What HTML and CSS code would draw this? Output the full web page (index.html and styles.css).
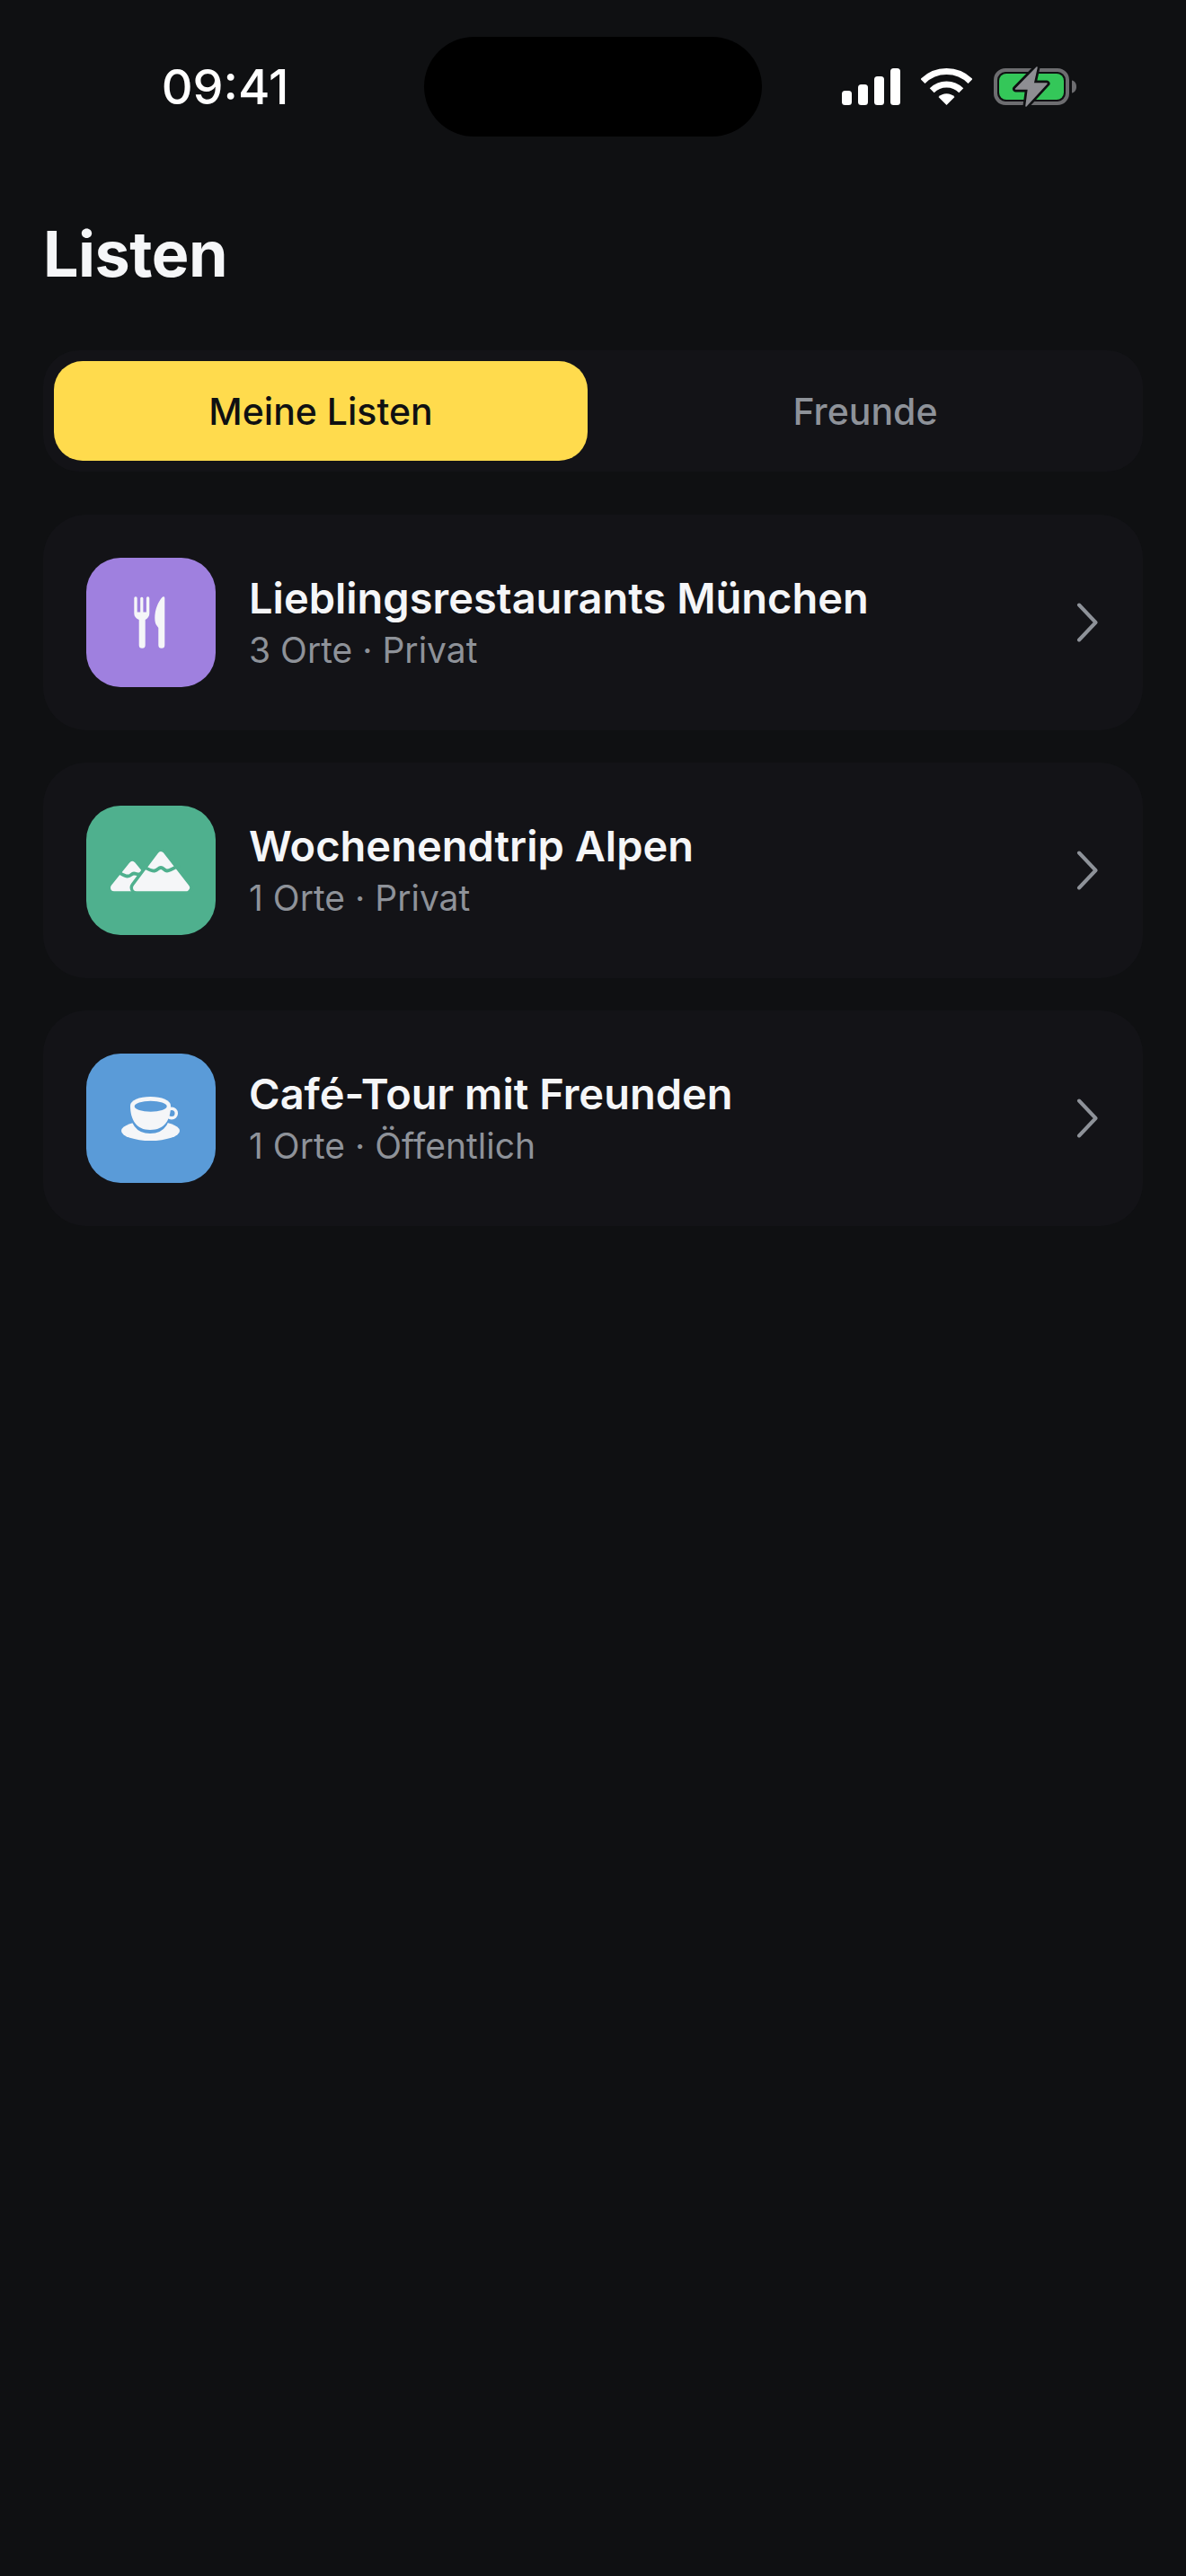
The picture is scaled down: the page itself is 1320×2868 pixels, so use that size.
FILE: index.html
```html
<!DOCTYPE html>
<html lang="de">
<head>
<meta charset="utf-8">
<title>Listen</title>
<link rel="stylesheet" href="styles.css">
</head>
<body>
<div class="status">
  <div class="time">09:41</div>
  <div class="island"></div>
  <div class="status-icons">
    <svg class="signal" width="65" height="41" viewBox="0 0 65 41"><rect x="0" y="25" width="11" height="16" rx="3.5"/><rect x="18" y="18" width="11" height="23" rx="3.5"/><rect x="36" y="9" width="11" height="32" rx="3.5"/><rect x="54" y="0" width="11" height="41" rx="3.5"/></svg>
    <svg class="wifi" width="57" height="41" viewBox="0 0 57 41"><path class="wifi-arc" d="M2 14.5A37.5 37.5 0 0 1 55 14.5"/><path class="wifi-arc" d="M12.2 24.7A23 23 0 0 1 44.8 24.7"/><path class="wifi-dot" d="M28.5 41L19.5 32A12.7 12.7 0 0 1 37.5 32Z"/></svg>
    <svg class="battery" width="94" height="49" viewBox="0 0 94 49"><rect class="batt-shell" x="2" y="6" width="80" height="37" rx="11"/><rect class="batt-fill" x="6" y="10" width="72" height="29" rx="8"/><path class="batt-nub" d="M87 17.500c3 .5 5 3 5 7s-2 6.500-5 7z"/><path class="batt-halo" d="M48 3L24.500 27H38.500L36 46L59 21H44Z"/><path class="batt-bolt" d="M48 3L24.500 27H38.500L36 46L59 21H44Z"/></svg>
  </div>
</div>

<h1 class="page-title">Listen</h1>

<div class="segment">
  <div class="seg-item seg-active">Meine Listen</div>
  <div class="seg-item">Freunde</div>
</div>

<div class="list">
  <div class="card">
    <div class="thumb thumb-purple">
      <svg width="144" height="144" viewBox="0 0 144 144"><path class="glyph" d="M53.300 45a1.700 1.700 0 0 1 3.400 0V60.500h3.500V45a1.700 1.700 0 0 1 3.200 0V60.500h3.500V45a1.700 1.700 0 0 1 3.400 0V62c0 3-1.800 5.500-4.600 7V97.200a3.500 3.500 0 0 1-7 0V69C55.100 67.500 53.300 65 53.300 62Z"/><path class="glyph" d="M84.500 44C80 49 76.300 58 76.300 67C76.300 71 77 73.500 78.500 75.500L80.300 78V97.200a3.500 3.500 0 0 0 7 0V45C87.300 43 85.500 43 84.500 44Z"/></svg>
    </div>
    <div class="card-text">
      <div class="card-title">Lieblingsrestaurants München</div>
      <div class="card-sub">3 Orte · Privat</div>
    </div>
    <svg class="chev" width="24" height="44" viewBox="0 0 24 44"><path d="M3 2.500L21.500 22L3 41.500"/></svg>
  </div>
  <div class="card">
    <div class="thumb thumb-green">
      <svg width="144" height="144" viewBox="0 0 144 144"><path class="glyph glyph-line" d="M51.300 66L62 79L55 91.300H31Z"/><path class="wave" d="M34 73C38 75 42 78.500 46 78.500S50 75.500 53 75.500S57 77.500 62 76"/><path class="mount-gap" d="M83 55.300L111 91.300H56Z"/><path class="glyph glyph-line" d="M83 55.300L111 91.300H56Z"/><path class="wave" d="M62 67C68 70 72 73 76 72.500S80 69 83 69S87 72.500 90 72.500S97 70 104 66"/></svg>
    </div>
    <div class="card-text">
      <div class="card-title">Wochenendtrip Alpen</div>
      <div class="card-sub">1 Orte · Privat</div>
    </div>
    <svg class="chev" width="24" height="44" viewBox="0 0 24 44"><path d="M3 2.500L21.500 22L3 41.500"/></svg>
  </div>
  <div class="card">
    <div class="thumb thumb-blue">
      <svg width="144" height="144" viewBox="0 0 144 144"><ellipse class="glyph" cx="71.500" cy="86" rx="32.500" ry="11"/><path class="cup-gap" d="M49 58C49 75 54 88 71 88C88 88 93 75 94 58Z"/><circle class="cup-handle" cx="95" cy="66.500" r="5.300"/><path class="glyph" d="M49 58C49 52 59 48 71.500 48S94 52 94 58C94 74 87 85 71 85C56 85 49 74 49 58Z"/><ellipse class="cup-inner" cx="71.700" cy="58.700" rx="18" ry="6"/></svg>
    </div>
    <div class="card-text">
      <div class="card-title">Café-Tour mit Freunden</div>
      <div class="card-sub">1 Orte · Öffentlich</div>
    </div>
    <svg class="chev" width="24" height="44" viewBox="0 0 24 44"><path d="M3 2.500L21.500 22L3 41.500"/></svg>
  </div>
</div>
</body>
</html>
```
FILE: styles.css
```css
* { box-sizing: border-box; }
html, body { margin: 0; padding: 0; }
body {
  width: 1320px;
  height: 2868px;
  overflow: hidden;
  padding-top: 41px;
  background: #0f1012;
  color: #f5f6f8;
  font-family: Inter, "Liberation Sans", sans-serif;
}
.status {
  display: flex;
  align-items: center;
  height: 111px;
}
.time {
  width: 472px;
  padding-left: 29px;
  text-align: center;
  font-size: 54px;
  font-weight: 550;
  color: #fff;
  line-height: 1;
}
.island {
  width: 376px;
  height: 111px;
  border-radius: 56px;
  background: #000;
}
.status-icons {
  display: flex;
  align-items: center;
  margin-left: 89px;
  gap: 23px;
}
.signal, .wifi-dot { fill: #fff; }
.wifi-arc { fill: none; stroke: #fff; stroke-width: 7; }
.battery { margin-left: 1px; }
.batt-shell { fill: none; stroke: #6d6d70; stroke-width: 4; }
.batt-fill { fill: #34c759; }
.batt-nub { fill: #6d6d70; }
.batt-halo { fill: #0f1012; stroke: #0f1012; stroke-width: 7; stroke-linejoin: round; }
.batt-bolt { fill: #8e8e93; stroke: #8e8e93; stroke-width: 1.500; stroke-linejoin: round; }
.page-title {
  margin: 0;
  padding: 89px 48px 0;
  font-size: 70px;
  line-height: 84px;
  font-weight: 700;
  letter-spacing: -0.5px;
}
.segment {
  display: flex;
  gap: 12px;
  width: 1224px;
  height: 135px;
  margin: 65px 48px 0;
  padding: 12px;
  background: #131317;
  border-radius: 40px;
}
.seg-item {
  flex: 1;
  display: flex;
  align-items: center;
  justify-content: center;
  border-radius: 32px;
  font-size: 41px;
  font-weight: 500;
  color: #8e9299;
}
.seg-active { background: #ffdb4d; color: #0f1012; }
.list {
  display: flex;
  flex-direction: column;
  gap: 36px;
  margin: 48px 48px 0;
}
.card {
  display: flex;
  align-items: center;
  height: 240px;
  padding: 0 48px;
  background: #131317;
  border-radius: 48px;
}
.thumb {
  width: 144px;
  height: 144px;
  flex: none;
  border-radius: 38px;
}
.thumb svg { display: block; }
.thumb-purple { background: #9f80df; }
.thumb-green { background: #4fb08e; }
.thumb-blue { background: #5a9bd8; }
.glyph { fill: #f5f6f8; }
.glyph-line { stroke: #f5f6f8; stroke-width: 8; stroke-linejoin: round; }
.mount-gap { fill: #4fb08e; stroke: #4fb08e; stroke-width: 15; stroke-linejoin: round; }
.wave { fill: none; stroke: #4fb08e; stroke-width: 3.800; }
.cup-gap { fill: #5a9bd8; stroke: #5a9bd8; stroke-width: 2; }
.cup-handle { fill: none; stroke: #f5f6f8; stroke-width: 3.500; }
.cup-inner { fill: #5a9bd8; }
.card-text {
  flex: 1;
  display: flex;
  flex-direction: column;
  margin-left: 37px;
}
.card-title {
  font-size: 47px;
  line-height: 56px;
  font-weight: 580;
}
.card-sub {
  margin-top: 6px;
  font-size: 39px;
  line-height: 48px;
  color: #8e9299;
}
.chev { flex: none; margin-right: 2px; }
.chev path {
  fill: none;
  stroke: #8e9299;
  stroke-width: 4;
  stroke-linecap: round;
  stroke-linejoin: round;
}
```
